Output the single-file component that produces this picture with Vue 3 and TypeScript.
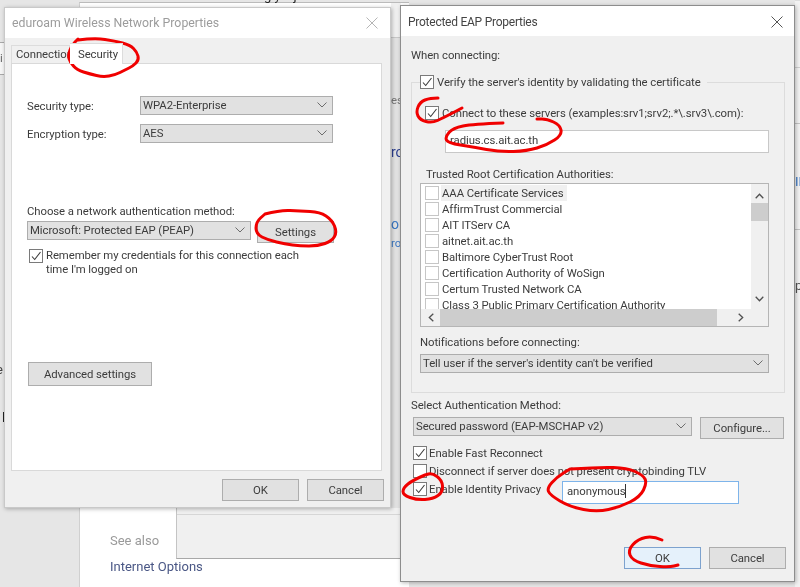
<script setup lang="ts">
const authorities: string[] = [
  'AAA Certificate Services',
  'AffirmTrust Commercial',
  'AIT ITServ CA',
  'aitnet.ait.ac.th',
  'Baltimore CyberTrust Root',
  'Certification Authority of WoSign',
  'Certum Trusted Network CA',
  'Class 3 Public Primary Certification Authority',
]
type Pt = [number, number]
const strokes: Pt[][] = [
  [[78, 40], [95, 38], [115, 41], [130, 45], [137, 52], [139, 60], [133, 66], [125, 70], [115, 75], [103, 77], [90, 74], [77, 70], [70, 62], [68, 55], [72, 45], [78, 39]],
  [[265, 214], [280, 210], [300, 211], [320, 212], [332, 220], [337, 232], [332, 241], [318, 246], [300, 246], [285, 244], [268, 240], [256, 234], [256, 222], [265, 214]],
  [[438, 98], [430, 98], [420, 102], [416, 112], [420, 120], [432, 123], [443, 118], [462, 108]],
  [[503, 123], [473, 124], [453, 128], [445, 137], [448, 143], [473, 147], [500, 152], [527, 151], [547, 145], [562, 135], [560, 125], [547, 119], [537, 119]],
  [[425, 475], [413, 480], [403, 488], [403, 495], [417, 500], [433, 499], [443, 492], [442, 480], [432, 473], [425, 475]],
  [[570, 469], [600, 467], [627, 468], [643, 475], [647, 483], [640, 497], [620, 507], [597, 512], [570, 507], [550, 495], [547, 488], [557, 477], [570, 469]],
  [[662, 540], [653, 536], [638, 539], [628, 550], [632, 560], [650, 566], [670, 567], [678, 565]],
]
function smooth(p: Pt[]): string {
  let d = `M${p[0][0]} ${p[0][1]}`
  for (let i = 1; i < p.length - 1; i++) {
    const mx = (p[i][0] + p[i + 1][0]) / 2
    const my = (p[i][1] + p[i + 1][1]) / 2
    d += ` Q${p[i][0]} ${p[i][1]} ${mx} ${my}`
  }
  const last = p[p.length - 1]
  return `${d} L${last[0]} ${last[1]}`
}
const scribbles: string[] = strokes.map(smooth)
</script>

<template>
  <div class="desktop">
    <!-- windows behind -->
    <div class="back-main">
      <span class="frag see-also">See also</span>
      <span class="frag inet">Internet Options</span>
      <span class="frag net">Network and Sharing Center</span>
    </div>
    <div class="back-panel"></div>
    <div class="back-strip"></div>
    <div class="back-gutter"></div>
    <div class="back-right"></div>
    <span class="frag f-top">g y&nbsp;&nbsp;&nbsp;&nbsp;j</span>
    <span class="frag f-i">i</span>
    <span class="frag f-e">e</span>
    <span class="frag f-l">l</span>
    <span class="frag f-es">es</span>
    <span class="frag f-ro blue">ro</span>
    <span class="frag f-o blue2">o</span>
    <span class="frag f-ro2 blue2">ro</span>
    <span class="frag f-in blue2">IN</span>
    <span class="frag f-p">p</span>

    <!-- eduroam dialog -->
    <section class="win win-left">
      <header class="title title-l">
        <span class="title-text grey">eduroam Wireless Network Properties</span>
        <svg class="close" width="12" height="12" viewBox="0 0 12 12"><path d="M.5.5l11 11M11.5.5l-11 11" stroke="#b5b5b5" fill="none" /></svg>
      </header>
      <div class="tabs">
        <div class="tab">Connection</div>
        <div class="tab tab-active">Security</div>
      </div>
      <div class="panel">
        <div class="form-grid">
          <span>Security type:</span>
          <div class="select">WPA2-Enterprise<svg class="chev" width="10" height="6" viewBox="0 0 10 6"><path d="M.5.5L5 5 9.500.5" /></svg></div>
          <span>Encryption type:</span>
          <div class="select">AES<svg class="chev" width="10" height="6" viewBox="0 0 10 6"><path d="M.5.5L5 5 9.500.5" /></svg></div>
        </div>
        <div class="choose-label">Choose a network authentication method:</div>
        <div class="method-row">
          <div class="select method">Microsoft: Protected EAP (PEAP)<svg class="chev" width="10" height="6" viewBox="0 0 10 6"><path d="M.5.5L5 5 9.500.5" /></svg></div>
          <button class="btn settings">Settings</button>
        </div>
        <div class="remember">
          <span class="cb"><svg width="12" height="12" viewBox="0 0 12 12"><path d="M2 6.500L4.700 9.500 10.500 2" /></svg></span>
          <span class="remember-text">Remember my credentials for this connection each time I'm logged on</span>
        </div>
        <button class="btn advanced">Advanced settings</button>
      </div>
      <footer class="foot-left">
        <button class="btn action">OK</button>
        <button class="btn action">Cancel</button>
      </footer>
    </section>

    <!-- Protected EAP dialog -->
    <section class="win win-right">
      <header class="title title-r">
        <span class="title-text narrow">Protected EAP Properties</span>
        <svg class="close" width="12" height="12" viewBox="0 0 12 12"><path d="M.5.5l11 11M11.5.5l-11 11" stroke="#555" fill="none" /></svg>
      </header>
      <div class="body-r">
        <div class="when">When connecting:</div>
        <div class="group">
          <div class="legend check">
            <span class="cb"><svg width="12" height="12" viewBox="0 0 12 12"><path d="M2 6.500L4.700 9.500 10.500 2" /></svg></span>
            <span>Verify the server's identity by validating the certificate</span>
          </div>
          <div class="connect check">
            <span class="cb"><svg width="12" height="12" viewBox="0 0 12 12"><path d="M2 6.500L4.700 9.500 10.500 2" /></svg></span>
            <span>Connect to these servers (examples:srv1;srv2;.*\.srv3\.com):</span>
          </div>
          <div class="input servers">radius.cs.ait.ac.th</div>
          <div class="trusted">Trusted Root Certification Authorities:</div>
          <div class="list">
            <div class="rows">
              <div v-for="(name, i) in authorities" :key="name" class="row">
                <span class="cb cb-white"></span>
                <span class="row-text" :class="{ 'row-hi': i === 0 }">{{ name }}</span>
              </div>
            </div>
            <div class="vbar">
              <svg width="9" height="6" viewBox="0 0 9 6"><path d="M.7 5.300L4.500 1.300 8.300 5.300" /></svg>
              <div class="vtrack"><div class="vthumb"></div></div>
              <svg width="9" height="6" viewBox="0 0 9 6"><path d="M.7.700L4.500 4.700 8.300.700" /></svg>
            </div>
            <div class="hbar">
              <svg width="6" height="9" viewBox="0 0 6 9"><path d="M5.300.7L1.300 4.500 5.300 8.300" /></svg>
              <div class="hthumb"></div>
              <svg width="6" height="9" viewBox="0 0 6 9"><path d="M.7.7L4.700 4.500 .7 8.300" /></svg>
            </div>
          </div>
          <div class="notif-label">Notifications before connecting:</div>
          <div class="select notif">Tell user if the server's identity can't be verified<svg class="chev" width="10" height="6" viewBox="0 0 10 6"><path d="M.5.5L5 5 9.500.5" /></svg></div>
        </div>
        <div class="auth-label">Select Authentication Method:</div>
        <div class="auth-row">
          <div class="select auth">Secured password (EAP-MSCHAP v2)<svg class="chev" width="10" height="6" viewBox="0 0 10 6"><path d="M.5.5L5 5 9.500.5" /></svg></div>
          <button class="btn configure">Configure...</button>
        </div>
        <div class="opts">
          <div class="check opt">
            <span class="cb"><svg width="12" height="12" viewBox="0 0 12 12"><path d="M2 6.500L4.700 9.500 10.500 2" /></svg></span>
            <span>Enable Fast Reconnect</span>
          </div>
          <div class="check opt">
            <span class="cb"></span>
            <span>Disconnect if server does not present cryptobinding TLV</span>
          </div>
          <div class="identity">
            <div class="check opt identity-check">
              <span class="cb"><svg width="12" height="12" viewBox="0 0 12 12"><path d="M2 6.500L4.700 9.500 10.500 2" /></svg></span>
              <span>Enable Identity Privacy</span>
            </div>
            <div class="input anon">anonymous<i class="caret"></i></div>
          </div>
        </div>
        <footer class="foot-right">
          <button class="btn action ok">OK</button>
          <button class="btn action">Cancel</button>
        </footer>
      </div>
    </section>

    <!-- red pen annotations -->
    <svg class="pen" width="800" height="587" viewBox="0 0 800 587">
      <path v-for="d in scribbles" :key="d" :d="d" />
    </svg>
  </div>
</template>

<style scoped>
.desktop {
  position: relative;
  width: 800px;
  height: 587px;
  overflow: hidden;
  background: #e6e6e6;
  font-family: Roboto, "Noto Sans", sans-serif;
  font-size: 11.35px;
  letter-spacing: -0.07px;
  line-height: 16px;
  color: #3c3c3c;
  filter: blur(0.35px);
}
.desktop div, .desktop section, .desktop header, .desktop footer, .desktop button, .desktop span {
  box-sizing: border-box;
}
.back-main {
  position: absolute; left: 79px; top: 2px; width: 330px; height: 600px;
  background: #fff; border-left: 1px solid #d0d0d0; border-top: 1px solid #bbb;
}
.back-panel {
  position: absolute; left: 176px; top: 490px; width: 230px; height: 69px;
  background: linear-gradient(#f0f0f0 0 23px, #d6d6d6 23px 24px, #f0f0f0 24px);
  border: 1px solid #c4c4c4; border-bottom: 1px solid #a8a8a8;
}
.back-strip {
  position: absolute; left: 0; top: 42px; width: 6px; height: 33px;
  background: #f6f6f6; border-top: 1px solid #a9a9a9; border-bottom: 1px solid #a9a9a9;
}
.back-gutter {
  position: absolute; left: 391px; top: 3px; width: 10px; height: 505px;
  background: linear-gradient(#f0f0f0 0 34px, #c8c8c8 34px 35px, #e2e2e2 35px);
}
.back-right {
  position: absolute; left: 795px; top: 0; width: 5px; height: 587px;
  background: linear-gradient(#dcdcdc 0 1px, #f2f2f2 1px 67px, #cfcfcf 67px 68px, #f2f2f2 68px 123px, #c4c4c4 123px 124px, #f2f2f2 124px 229px, #c4c4c4 229px 230px, #f2f2f2 230px);
}
.frag { position: absolute; white-space: nowrap; letter-spacing: 0; }
.see-also { left: 30px; top: 530px; font-size: 13px; color: #9a9a9a; }
.inet { left: 30px; top: 556px; font-size: 13px; color: #4a5785; }
.net { left: 30px; top: 582px; font-size: 13px; color: #4a5785; }
.f-top { left: 264px; top: -12px; font-size: 13px; color: #222; }
.f-i { left: 0; top: 50px; color: #666; }
.f-e { left: -4px; top: 362px; color: #444; font-size: 13px; }
.f-l { left: 2px; top: 410px; color: #222; font-size: 13px; }
.f-es { left: 391px; top: 92px; color: #777; }
.f-ro { left: 391px; top: 144px; font-size: 14px; }
.f-o { left: 391px; top: 216px; font-size: 14px; }
.f-ro2 { left: 391px; top: 235px; }
.f-in { left: 795px; top: 174px; font-size: 13px; }
.f-p { left: 795px; top: 278px; font-size: 13px; color: #555; }
.blue { color: #2c3f8f; }
.blue2 { color: #3b78c4; }

.win {
  position: absolute;
  display: flex;
  flex-direction: column;
  background: #f0f0f0;
  border: 1px solid #a0a0a0;
  box-shadow: 1px 1px 4px rgba(0, 0, 0, .28);
}
.win-left { left: 4px; top: 7px; width: 387px; height: 501px; border-color: #c9c9c9; }
.win-right { left: 400px; top: 5px; width: 395px; height: 577px; border-color: #8d8d8d; }

.title {
  flex: none;
  height: 30px;
  display: flex;
  align-items: center;
  justify-content: space-between;
  background: #fff;
  padding: 0 12px 0 7px;
}
.title-l { padding-bottom: 1px; }
.title-r { padding: 1px 11px 0 7px; }
.title-text { font-size: 12.3px; letter-spacing: 0; color: #444; }
.title-text.grey { color: #9c9c9c; }
.title-text.narrow { font-size: 12px; letter-spacing: -0.25px; }

.tabs { flex: none; height: 25px; display: flex; align-items: flex-end; padding-left: 6px; }
.tab {
  height: 18px;
  width: 59px;
  padding-left: 4px;
  background: #f0f0f0;
  border: 1px solid #dcdcdc;
  border-bottom: 0;
  line-height: 17px;
  white-space: nowrap;
  overflow: hidden;
}
.tab-active {
  position: relative;
  z-index: 1;
  width: 53px;
  height: 21px;
  margin-bottom: -1px;
  padding-left: 8px;
  background: #fff;
  border-left: 0;
  line-height: 20px;
}
.panel {
  flex: none;
  width: 371px;
  height: 408px;
  margin-left: 6px;
  padding: 32px 0 0 15px;
  background: #fff;
  border: 1px solid #d9d9d9;
}
.form-grid {
  display: grid;
  grid-template-columns: 113px 193px;
  grid-auto-rows: 19px;
  row-gap: 9px;
  align-items: center;
}
.select {
  display: flex;
  align-items: center;
  justify-content: space-between;
  height: 19px;
  padding: 0 5px 1px 2px;
  background: #e1e1e1;
  border: 1px solid #adadad;
  white-space: nowrap;
}
.chev { flex: none; fill: none; stroke: #6d6d6d; }
.choose-label { margin-top: 60px; }
.method-row { display: flex; align-items: flex-start; gap: 6px; margin-top: 2px; }
.method { width: 224px; }
.btn {
  display: block;
  padding: 0;
  font: inherit;
  letter-spacing: inherit;
  color: #3c3c3c;
  background: #e1e1e1;
  border: 1px solid #adadad;
  border-radius: 0;
}
.settings { width: 77px; height: 22px; }
.cb {
  flex: none;
  display: flex;
  align-items: center;
  justify-content: center;
  width: 14px;
  height: 14px;
  background: #fff;
  border: 1px solid #7a7a7a;
}
.cb svg { fill: none; stroke: #3c3c3c; stroke-width: 1.1; }
.cb-white { border-color: #c6c6c6; }
.remember { display: flex; gap: 3px; margin: 6px 0 0 2px; }
.remember-text { width: 262px; line-height: 13.5px; margin-top: 0; }
.advanced { width: 124px; height: 24px; margin: 86px 0 0 1px; }
.foot-left { flex: none; display: flex; justify-content: flex-end; gap: 8px; padding: 8px 6px 0 0; }
.action { width: 77px; height: 22px; }

.body-r { flex: 1; display: flex; flex-direction: column; padding: 0 9px 0 10px; min-height: 0; }
.when { margin-top: 11px; }
.group { height: 311px; margin-top: 19px; border: 1px solid #dcdcdc; }
.check { display: flex; align-items: center; gap: 3px; height: 14px; white-space: nowrap; }
.legend { width: fit-content; margin: -8px 0 0 8px; padding-right: 6px; background: #f0f0f0; }
.connect { margin: 17px 0 0 13px; }
.input {
  display: flex;
  align-items: center;
  height: 23px;
  background: #fff;
  border: 1px solid #c8c8c8;
  padding: 0 0 3px 4px;
}
.servers { width: 324px; margin: 10px 0 0 33px; }
.trusted { margin: 13px 0 0 14px; }
.list {
  display: grid;
  grid-template-columns: 1fr 17px;
  grid-template-rows: 1fr 17px;
  width: 349px;
  height: 144px;
  margin: 1px 0 0 8px;
  background: #fff;
  border: 1px solid #b5b5b5;
}
.rows { padding: 1px 0 0 4px; overflow: hidden; min-height: 0; }
.row { display: flex; align-items: center; gap: 2px; height: 16px; white-space: nowrap; }
.row-text { padding: 0 4px 0 1px; line-height: 16px; }
.row-hi { background: #f0f0f0; }
.vbar {
  display: flex; flex-direction: column; align-items: center; justify-content: space-between;
  padding: 9px 0 7px; background: #f0f0f0;
}
.vbar svg, .hbar svg { flex: none; fill: none; stroke: #505050; stroke-width: 1.3; }
.vtrack { flex: 1; width: 100%; padding-top: 4px; }
.vthumb { width: 100%; height: 18px; background: #cdcdcd; }
.hbar {
  display: flex; align-items: center; padding-left: 7px;
  grid-column: 1 / 3; background: #f0f0f0;
}
.hthumb { width: 277px; height: 17px; margin: 0 21px 0 6px; background: #cdcdcd; }
.notif-label { margin: 7px 0 0 8px; }
.notif { width: 349px; margin: 4px 0 0 8px; }
.auth-label { margin-top: 4px; }
.auth-row { display: flex; align-items: flex-start; gap: 8px; margin: 4px 0 0 2px; }
.auth { width: 279px; }
.configure { width: 84px; height: 22px; }
.opts { display: flex; flex-direction: column; margin: 7px 0 0 2px; row-gap: 4px; }
.opt { gap: 2px; }
.identity { display: flex; align-items: flex-start; }
.identity-check { width: 149px; margin-top: 0; }
.anon { width: 177px; margin-top: -1px; border-color: #7eb4ea; background: #fff; }
.caret { display: inline-block; width: 1px; height: 14px; background: #333; }
.foot-right { display: flex; justify-content: flex-end; gap: 8px; margin: 43px -1px 0 0; }
.ok { background: #e5f1fb; border-color: #7da2ce; }

.close { flex: none; }
.pen {
  position: absolute; left: 0; top: 0;
  fill: none; stroke: #f00000; stroke-width: 3; stroke-linejoin: round; stroke-linecap: round;
}
</style>
